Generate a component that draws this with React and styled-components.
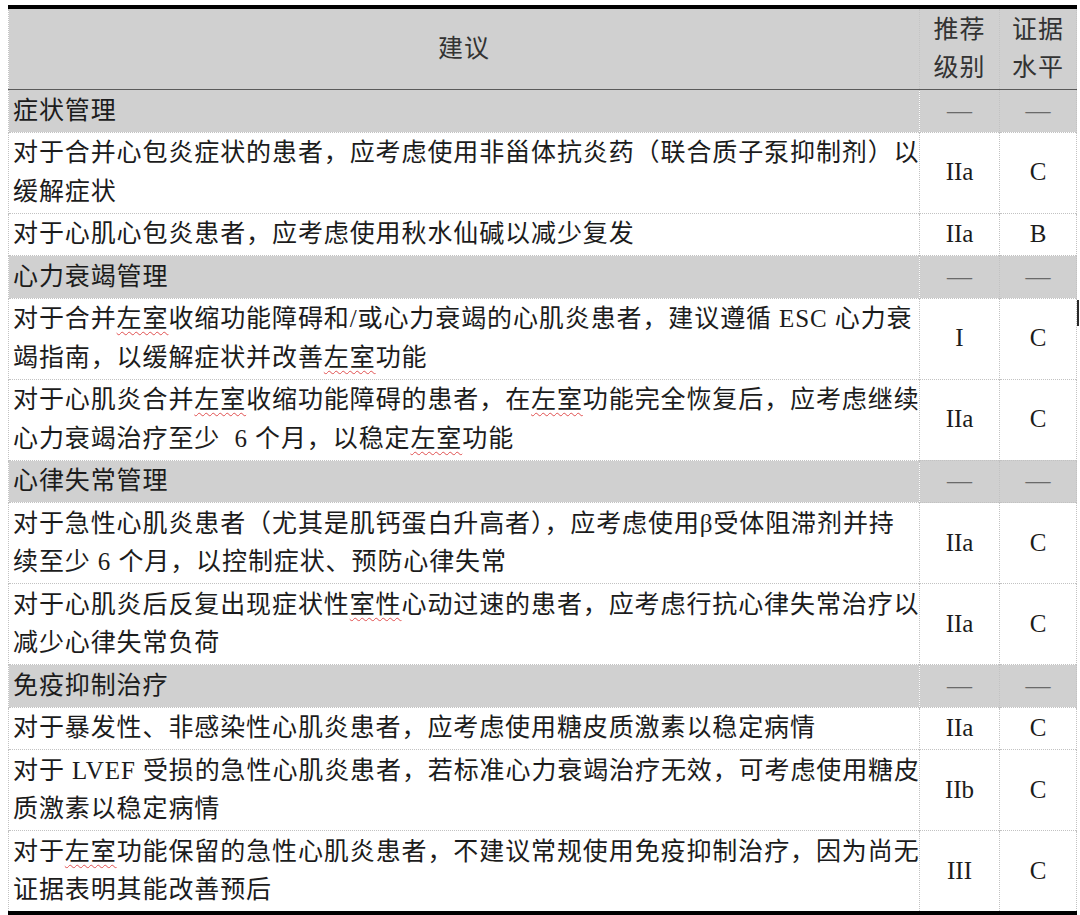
import React from "react";
import styled, { createGlobalStyle } from "styled-components";

const Global = createGlobalStyle`
  html, body { margin: 0; padding: 0; background: #ffffff; }
  body { font-family: "Liberation Serif", "Noto Sans CJK SC", serif; }
`;

const Page = styled.div`
  position: relative;
  padding: 5px 0 0 8px;
  width: 1080px;
  box-sizing: border-box;
`;

const Table = styled.table`
  width: 1068px;
  border-collapse: collapse;
  table-layout: fixed;
  border-top: 4px solid #000;
  border-bottom: 4px solid #000;
  font-family: "Liberation Serif", "Noto Sans CJK SC", serif;
  font-size: 25px;
  letter-spacing: 0.9px;
  color: #1c1c1c;
`;

const HeadRow = styled.tr`
  background: #d0d0d0;
  border-bottom: 1px solid #5a5a5a;
`;

const HeadCell = styled.th`
  font-weight: 400;
  color: #333;
  line-height: 38.5px;
  padding: 1.5px 0 1.5px;
  text-align: center;
  vertical-align: middle;
  border-left: 1px dotted ${(p) => (p.$first ? "#c4c4c4" : "#c8c8c8")};
  border-right: 1px dotted #c4c4c4;
`;

const Row = styled.tr`
  background: ${(p) => (p.$category ? "#d0d0d0" : "#ffffff")};
  border-top: 1px dotted #c2c2c2;
`;

const TextCell = styled.td`
  line-height: 38.5px;
  padding: 1.5px 4px 1.5px;
  white-space: pre;
  vertical-align: middle;
  border-left: 1px dotted #c2c2c2;
  border-right: 1px dotted #c2c2c2;
  overflow: hidden;
`;

const GradeCell = styled.td`
  line-height: 38.5px;
  padding: 1.5px 0 1.5px;
  text-align: center;
  vertical-align: middle;
  letter-spacing: 0;
  color: ${(p) => (p.$dash ? "#6a6a6a" : "#1c1c1c")};
  border-left: 1px dotted #c2c2c2;
  border-right: 1px dotted #c2c2c2;
`;

const Line = styled.div`
  height: 38.5px;
`;

const Wavy = styled.span`
  text-decoration: underline wavy #e05050;
  text-decoration-thickness: 1px;
  text-underline-offset: 4px;
`;

const Caret = styled.div`
  position: absolute;
  left: 1077px;
  top: 300px;
  width: 2px;
  height: 26px;
  background: #2a2a2a;
`;

const sections = [
  {
    title: "症状管理",
    rows: [
      {
        lines: [
          "对于合并心包炎症状的患者，应考虑使用非甾体抗炎药（联合质子泵抑制剂）以",
          "缓解症状",
        ],
        cls: "IIa",
        lvl: "C",
      },
      {
        lines: ["对于心肌心包炎患者，应考虑使用秋水仙碱以减少复发"],
        cls: "IIa",
        lvl: "B",
      },
    ],
  },
  {
    title: "心力衰竭管理",
    rows: [
      {
        lines: [
          "对于合并[左室]收缩功能障碍和/或心力衰竭的心肌炎患者，建议遵循 ESC 心力衰",
          "竭指南，以缓解症状并改善[左室]功能",
        ],
        cls: "I",
        lvl: "C",
      },
      {
        lines: [
          "对于心肌炎合并[左室]收缩功能障碍的患者，在[左室]功能完全恢复后，应考虑继续",
          "心力衰竭治疗至少  6 个月，以稳定[左室]功能",
        ],
        cls: "IIa",
        lvl: "C",
      },
    ],
  },
  {
    title: "心律失常管理",
    rows: [
      {
        lines: [
          "对于急性心肌炎患者（尤其是肌钙蛋白升高者），应考虑使用β受体阻滞剂并持",
          "续至少 6 个月，以控制症状、预防心律失常",
        ],
        cls: "IIa",
        lvl: "C",
      },
      {
        lines: [
          "对于心肌炎后反复出现症状性[室性]心动过速的患者，应考虑行抗心律失常治疗以",
          "减少心律失常负荷",
        ],
        cls: "IIa",
        lvl: "C",
      },
    ],
  },
  {
    title: "免疫抑制治疗",
    rows: [
      {
        lines: ["对于暴发性、非感染性心肌炎患者，应考虑使用糖皮质激素以稳定病情"],
        cls: "IIa",
        lvl: "C",
      },
      {
        lines: [
          "对于 LVEF 受损的急性心肌炎患者，若标准心力衰竭治疗无效，可考虑使用糖皮",
          "质激素以稳定病情",
        ],
        cls: "IIb",
        lvl: "C",
      },
      {
        lines: [
          "对于[左室]功能保留的急性心肌炎患者，不建议常规使用免疫抑制治疗，因为尚无",
          "证据表明其能改善预后",
        ],
        cls: "III",
        lvl: "C",
      },
    ],
  },
];

function renderLine(text) {
  const parts = text.split(/(\[[^\]]+\])/g).filter(Boolean);
  return parts.map((part, i) =>
    part.startsWith("[") ? (
      <Wavy key={i}>{part.slice(1, -1)}</Wavy>
    ) : (
      <React.Fragment key={i}>{part}</React.Fragment>
    )
  );
}

export default function App() {
  return (
    <Page>
      <Global />
      <Table>
        <colgroup>
          <col style={{ width: 911 }} />
          <col style={{ width: 80 }} />
          <col style={{ width: 77 }} />
        </colgroup>
        <thead>
          <HeadRow>
            <HeadCell $first>建议</HeadCell>
            <HeadCell>
              <Line>推荐</Line>
              <Line>级别</Line>
            </HeadCell>
            <HeadCell>
              <Line>证据</Line>
              <Line>水平</Line>
            </HeadCell>
          </HeadRow>
        </thead>
        <tbody>
          {sections.map((sec) => (
            <React.Fragment key={sec.title}>
              <Row $category>
                <TextCell>{sec.title}</TextCell>
                <GradeCell $dash>—</GradeCell>
                <GradeCell $dash>—</GradeCell>
              </Row>
              {sec.rows.map((r, i) => (
                <Row key={i}>
                  <TextCell>
                    {r.lines.map((l, j) => (
                      <Line key={j}>{renderLine(l)}</Line>
                    ))}
                  </TextCell>
                  <GradeCell>{r.cls}</GradeCell>
                  <GradeCell>{r.lvl}</GradeCell>
                </Row>
              ))}
            </React.Fragment>
          ))}
        </tbody>
      </Table>
      <Caret />
    </Page>
  );
}
